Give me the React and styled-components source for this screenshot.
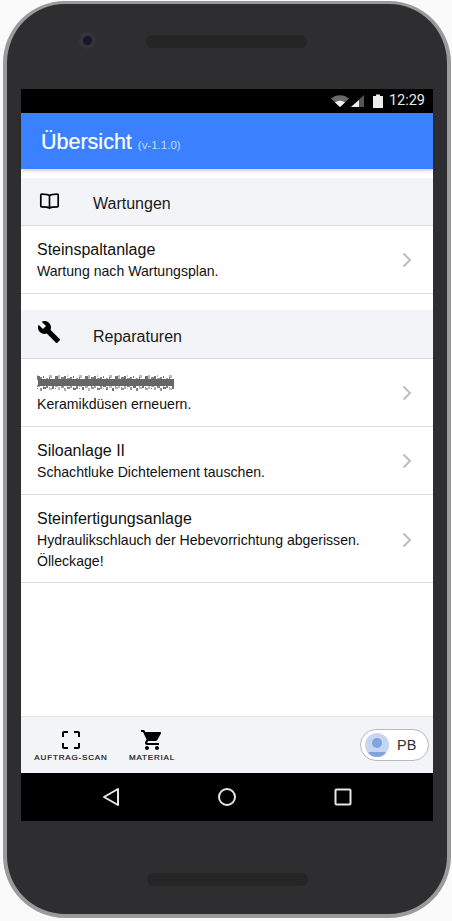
import styled, { createGlobalStyle } from 'styled-components';

const GlobalStyle = createGlobalStyle`
    html, body {
        margin: 0;
        padding: 0;
        background: #fafafa;
        font-family: "Liberation Sans", Arial, sans-serif;
    }
    * {
        box-sizing: border-box;
    }
`;

const Page = styled.div`
    width: 452px;
    height: 921px;
    padding: 1px 1px 3px 3px;
`;

const Phone = styled.div`
    display: flex;
    flex-direction: column;
    height: 917px;
    background: #2e2d2f;
    border: solid #9a9a9a;
    border-width: 3px 4px 4px 4px;
    border-radius: 62px;
    padding: 0 14px;
`;

const TopBezel = styled.div`
    flex: 0 0 85px;
    display: flex;
    align-items: flex-start;
    padding: 28px 0 0 58px;
`;

const Camera = styled.div`
    width: 17px;
    height: 17px;
    border-radius: 50%;
    background: #1a1430;
    border: 4px solid #353437;
`;

const Speaker = styled.div`
    width: 161px;
    height: 13px;
    margin: 3px 0 0 50px;
    border-radius: 7px;
    background: #262525;
`;

const Screen = styled.div`
    flex: 0 0 732px;
    display: flex;
    flex-direction: column;
    background: #fff;
`;

const StatusBar = styled.div`
    flex: 0 0 24px;
    display: flex;
    justify-content: flex-end;
    align-items: center;
    gap: 6px;
    padding: 0 8px 1px 0;
    background: #000;
    color: #e8e8e8;
    font-family: Roboto, sans-serif;
    font-size: 14.5px;
`;

const StatusIcons = styled.svg`
    display: block;
`;

const Header = styled.div`
    flex: 0 0 56px;
    display: flex;
    align-items: baseline;
    padding: 17px 0 0 20px;
    background: #3a80ff;
    color: #fff;
    box-shadow: 0 2px 3px rgba(0, 0, 0, 0.18);
    position: relative;
`;

const HeaderTitle = styled.span`
    font-size: 21.5px;
    -webkit-text-stroke: 0.2px #fff;
`;

const Version = styled.span`
    margin-left: 6px;
    font-size: 11.5px;
    color: #c4d9ff;
`;

const Content = styled.div`
    flex: 1 1 auto;
    padding-top: 9px;
    min-height: 0;
`;

const SectionHead = styled.div`
    display: flex;
    align-items: center;
    height: ${({ $tall }) => ($tall ? 49 : 48)}px;
    background: #f3f4f8;
    border-bottom: 1px solid #d9d9d9;
    margin-top: ${({ $spaced }) => ($spaced ? 16 : 0)}px;
`;

const HeadIcon = styled.div`
    flex: 0 0 72px;
    display: flex;
    padding: 0 0 4px 16px;
`;

const HeadLabel = styled.span`
    padding-top: 5px;
    font-size: 16px;
    color: #1a1a1a;
`;

const Row = styled.div`
    display: flex;
    align-items: center;
    justify-content: space-between;
    min-height: 68px;
    padding: ${({ $multi }) => ($multi ? '14px 21px 10px 16px' : '13px 21px 11px 16px')};
    border-bottom: 1px solid #dcdcdc;
`;

const RowText = styled.div`
    flex: 1 1 auto;
    min-width: 0;
    padding-right: ${({ $wrap }) => ($wrap ? 24 : 0)}px;
`;

const RowTitle = styled.div`
    font-size: 16px;
    line-height: 20px;
    color: #111;
`;

const RowSub = styled.div`
    margin-top: 1px;
    font-size: 14.1px;
    line-height: 21px;
    color: #111;
`;

const Redacted = styled.svg`
    display: block;
    width: 138px;
    height: 20px;
`;

const Chevron = styled.svg`
    flex: 0 0 10px;
    width: 10px;
    height: 16px;
    margin-bottom: 2px;
`;

const BottomBar = styled.div`
    flex: 0 0 57px;
    display: flex;
    align-items: flex-start;
    background: #f3f4f8;
    border-top: 1px solid #e4e4e4;
    padding: 11px 4px 0 14px;
`;

const Tab = styled.div`
    display: flex;
    flex-direction: column;
    align-items: center;
    width: ${({ $w }) => $w}px;
    margin-right: ${({ $gap }) => $gap || 0}px;
`;

const TabLabel = styled.span`
    margin-top: 1px;
    font-size: 8px;
    line-height: 10px;
    letter-spacing: 0.85px;
    white-space: nowrap;
    color: #111;
    -webkit-text-stroke: 0.2px #111;
`;

const UserChip = styled.div`
    display: flex;
    align-items: center;
    gap: 8px;
    width: 69px;
    height: 32px;
    margin: 1px 0 0 auto;
    padding-left: 4px;
    background: #fff;
    border: 1px solid #b9b9b9;
    border-radius: 16px;
    font-size: 14.5px;
    color: #333;
`;

const NavBar = styled.div`
    flex: 0 0 48px;
    display: flex;
    align-items: center;
    justify-content: center;
    gap: 98px;
    background: #000;
`;

const BottomBezel = styled.div`
    flex: 1 1 auto;
    display: flex;
    justify-content: center;
    padding-top: 52px;
`;

const LowerSpeaker = styled(Speaker)`
    margin: 0;
`;

const Wrench = () => (
    <svg width="24" height="24" viewBox="0 0 24 24" fill="#000">
        <path d="M22.7 19l-9.1-9.1c.9-2.3.4-5-1.5-6.9-2-2-5-2.4-7.4-1.3L9 6 6 9 1.6 4.7C.4 7.1.9 10.1 2.9 12.1c1.9 1.9 4.6 2.4 6.9 1.5l9.1 9.1c.4.4 1 .4 1.4 0l2.3-2.3c.5-.4.5-1.1.1-1.4z" />
    </svg>
);

const Book = () => (
    <svg width="24" height="24" viewBox="0 0 24 24" fill="none" stroke="#000" strokeWidth="1.7">
        <path d="M12.500 7.500C11 6.300 9 6.100 4.700 6.100c-.6 0-.9.3-.9.9v11c0 .5.3.8.9.8 4.300 0 6.300.1 7.800 1.300 1.500-1.200 3.500-1.300 7.800-1.300.6 0 .9-.3.9-.8V7c0-.6-.3-.9-.9-.9-4.300 0-6.300.2-7.800 1.400zM12.500 7.500V20" />
    </svg>
);

const Next = () => (
    <Chevron viewBox="0 0 10 16" fill="none" stroke="#bdbdc2" strokeWidth="2">
        <path d="M1.500 1.500L8 8l-6.500 6.500" />
    </Chevron>
);

const ScanIcon = () => (
    <svg width="24" height="24" viewBox="0 0 24 24" fill="#000">
        <path d="M3 5v4h2V5h4V3H5c-1.100 0-2 .9-2 2zm2 10H3v4c0 1.100.9 2 2 2h4v-2H5v-4zm14 4h-4v2h4c1.100 0 2-.9 2-2v-4h-2v4zm0-16h-4v2h4v4h2V5c0-1.100-.9-2-2-2z" />
    </svg>
);

const CartIcon = () => (
    <svg width="24" height="24" viewBox="0 0 24 24" fill="#000">
        <path d="M7 18c-1.100 0-1.990.9-1.990 2S5.900 22 7 22s2-.9 2-2-.9-2-2-2zM1 2v2h2l3.600 7.590-1.350 2.450c-.16.28-.25.61-.25.96 0 1.100.9 2 2 2h12v-2H7.420c-.14 0-.25-.11-.25-.25l.03-.12.9-1.630h7.450c.75 0 1.410-.41 1.750-1.030l3.580-6.470c.08-.14.12-.31.12-.48 0-.55-.45-1-1-1H5.210l-.94-2H1zm16 16c-1.100 0-1.990.9-1.990 2s.89 2 1.990 2 2-.9 2-2-.9-2-2-2z" />
    </svg>
);

const Avatar = () => (
    <svg width="24" height="24" viewBox="0 0 24 24">
        <defs>
            <clipPath id="avatar-clip">
                <circle cx="12" cy="12" r="12" />
            </clipPath>
        </defs>
        <g clipPath="url(#avatar-clip)">
            <rect width="24" height="24" fill="#c6d5f2" />
            <circle cx="12" cy="10" r="5" fill="#7fa4e0" />
            <rect x="3" y="19" width="18" height="5" rx="2" fill="#7fa4e0" />
        </g>
    </svg>
);

const StatusGlyphs = () => (
    <StatusIcons width="52" height="16" viewBox="0 0 52 16">
        <path d="M0 5.500C5 1 13 1 18 5.500L9 14z" fill="#6a6a6a" />
        <path d="M4 9.500C7 7 11 7 14 9.500L9 14z" fill="#efefef" />
        <path d="M33 2V14H20z" fill="#555" />
        <path d="M28 7V14H20z" fill="#efefef" />
        <rect x="42" y="3" width="10" height="12" fill="#ececec" />
        <rect x="45" y="1.500" width="4" height="2" fill="#ececec" />
    </StatusIcons>
);

// greyed out row title: solid core with fuzzy specks along the edges
const Scribble = () => {
    const specks = [];
    for (let i = 0; i < 70; i++) {
        const x = (i * 2 + (i * 13) % 3) % 138;
        const w = 1 + (i * 7) % 3;
        specks.push(<rect key={`t${i}`} x={x} y={2 + (i * 17) % 5} width={w} height={2 + (i * 11) % 3} opacity={0.45 + ((i * 3) % 5) * 0.12} />);
        specks.push(<rect key={`b${i}`} x={x} y={12 + (i * 19) % 4} width={w} height={1 + (i * 23) % 3} opacity={0.45 + ((i * 7) % 5) * 0.12} />);
    }
    return (
        <Redacted viewBox="0 0 138 20" fill="#666">
            <rect x="1" y="6" width="136" height="7" />
            {specks}
        </Redacted>
    );
};

const App = () => {
    return (
        <Page>
            <GlobalStyle />
            <Phone>
                <TopBezel>
                    <Camera />
                    <Speaker />
                </TopBezel>
                <Screen>
                    <StatusBar>
                        <StatusGlyphs />
                        <span>12:29</span>
                    </StatusBar>
                    <Header>
                        <HeaderTitle>Übersicht</HeaderTitle>
                        <Version>(v-1.1.0)</Version>
                    </Header>
                    <Content>
                        <SectionHead>
                            <HeadIcon><Book /></HeadIcon>
                            <HeadLabel>Wartungen</HeadLabel>
                        </SectionHead>
                        <Row>
                            <RowText>
                                <RowTitle>Steinspaltanlage</RowTitle>
                                <RowSub>Wartung nach Wartungsplan.</RowSub>
                            </RowText>
                            <Next />
                        </Row>
                        <SectionHead $spaced $tall>
                            <HeadIcon><Wrench /></HeadIcon>
                            <HeadLabel>Reparaturen</HeadLabel>
                        </SectionHead>
                        <Row>
                            <RowText>
                                <Scribble />
                                <RowSub>Keramikdüsen erneuern.</RowSub>
                            </RowText>
                            <Next />
                        </Row>
                        <Row>
                            <RowText>
                                <RowTitle>Siloanlage II</RowTitle>
                                <RowSub>Schachtluke Dichtelement tauschen.</RowSub>
                            </RowText>
                            <Next />
                        </Row>
                        <Row $multi>
                            <RowText $wrap>
                                <RowTitle>Steinfertigungsanlage</RowTitle>
                                <RowSub>Hydraulikschlauch der Hebevorrichtung abgerissen. Ölleckage!</RowSub>
                            </RowText>
                            <Next />
                        </Row>
                    </Content>
                    <BottomBar>
                        <Tab $w={72} $gap={22}>
                            <ScanIcon />
                            <TabLabel>AUFTRAG-SCAN</TabLabel>
                        </Tab>
                        <Tab $w={46}>
                            <CartIcon />
                            <TabLabel>MATERIAL</TabLabel>
                        </Tab>
                        <UserChip>
                            <Avatar />
                            <span>PB</span>
                        </UserChip>
                    </BottomBar>
                    <NavBar>
                        <svg width="18" height="20" viewBox="0 0 18 20" fill="none" stroke="#e6e6e6" strokeWidth="2" strokeLinejoin="round">
                            <path d="M16 2V18L2 10z" />
                        </svg>
                        <svg width="18" height="18" viewBox="0 0 18 18" fill="none" stroke="#e6e6e6" strokeWidth="2">
                            <circle cx="9" cy="9" r="8" />
                        </svg>
                        <svg width="18" height="18" viewBox="0 0 18 18" fill="none" stroke="#e6e6e6" strokeWidth="2">
                            <rect x="1.500" y="1.500" width="15" height="15" rx="1" />
                        </svg>
                    </NavBar>
                </Screen>
                <BottomBezel>
                    <LowerSpeaker />
                </BottomBezel>
            </Phone>
        </Page>
    );
};

export default App;
